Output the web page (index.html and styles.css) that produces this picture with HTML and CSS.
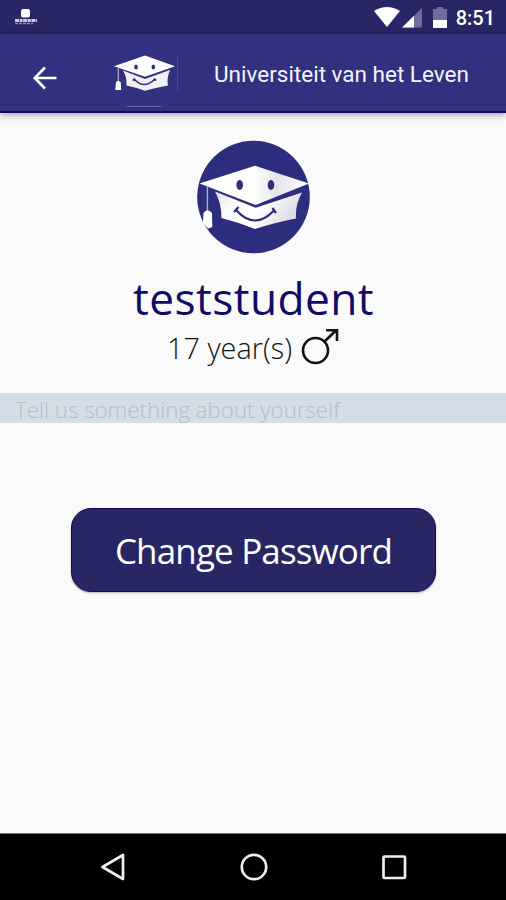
FILE: index.html
```html
<!DOCTYPE html>
<html lang="en">
<head>
  <meta charset="UTF-8" />
  <meta name="viewport" content="width=device-width, initial-scale=1.0" />
  <title>Universiteit van het Leven</title>
  <link rel="stylesheet" href="styles.css">
</head>
<body>

  <div class="screen">
    <div class="status-bar">
      <svg class="notification" width="24" height="18" viewBox="0 0 24 18">
        <rect x="7" y="1" width="9" height="8.500" rx="2" fill="#fff" />
        <path d="M1 12.500H23" stroke="#c9c8dc" stroke-width="3" stroke-dasharray="4 .6 3 .6" />
        <path d="M1 15.500H19" stroke="#9291b5" stroke-width="1.300" stroke-dasharray="3 1" />
      </svg>
      <div class="status-icons">
        <svg width="76" height="24" viewBox="0 0 76 24">
          <path d="M1 6Q14 -2 27 6L14 22Z" fill="#fff" />
          <path d="M49 3V22.500H29Z" fill="#6f6e9b" />
          <path d="M41 10.800V22.500H29Z" fill="#fff" />
          <path d="M60 4H64V2H70V4H74V15H60Z" fill="#6f6e9b" />
          <path d="M60 15H74V23H60Z" fill="#fff" />
        </svg>
        <span class="clock">8:51</span>
      </div>
    </div>

    <header class="app-bar">
      <button class="back-btn" aria-label="Back">
        <svg width="26" height="26" viewBox="0 0 26 26">
          <path d="M13 2.500L2.800 13L13 23.500M3 13H24.500" fill="none" stroke="#fff" stroke-width="2.700" />
        </svg>
      </button>
      <svg class="logo" width="68" height="56" viewBox="112 52 68 56">
        <path d="M114 66.300L145 55.500L175 66.300L145 76.800Z" fill="#fff" />
        <path d="M123 70.500L145 79L170 70Q166.500 78 168 85.500Q157 87.500 145 90.700Q136 87.500 126.500 85.500Q127 77 123 70.500Z" fill="#f1f1f3" />
        <ellipse cx="136" cy="67" rx="1.800" ry="2.600" fill="#2d2d7d" />
        <ellipse cx="153.300" cy="67" rx="1.800" ry="2.600" fill="#2d2d7d" />
        <path d="M134 79Q144 90 155 79M132.800 80.300L135 78.500M154 78.500L156.200 80.300" fill="none" stroke="#2d2d7d" stroke-width="1.600" />
        <path d="M118.300 67V82" stroke="#a5a4c8" stroke-width="1.300" />
        <path d="M116 82Q118.300 80 120.700 82L121.200 90H115.200Z" fill="#fff" />
        <path d="M177.500 56V92" stroke="#44438b" />
        <path d="M127 106.500H161" stroke="#66659f" />
      </svg>
      <h1>Universiteit van het Leven</h1>
    </header>

    <main class="profile">
      <svg class="avatar" width="114" height="114" viewBox="196 140 114 114">
        <defs>
          <linearGradient id="capShade" x1="0" y1="0" x2="1" y2="0">
            <stop offset=".5" stop-color="#fff" />
            <stop offset=".7" stop-color="#e4e4e8" />
            <stop offset="1" stop-color="#fff" />
          </linearGradient>
          <linearGradient id="faceShade" x1="0" y1="0" x2="1" y2=".3">
            <stop offset="0" stop-color="#dedee3" />
            <stop offset=".25" stop-color="#fafafa" />
            <stop offset=".6" stop-color="#fff" />
            <stop offset="1" stop-color="#dcdce1" />
          </linearGradient>
        </defs>
        <circle cx="253.500" cy="197" r="56.300" fill="#2d2d7d" />
        <path d="M199.500 183.500L255 165.800L309 183.500L255.700 205Z" fill="url(#capShade)" />
        <path d="M215 191.500L255.700 207.700L302 192.500Q295 205 296 218.500Q277 222 255 229Q239 222.500 221.500 218Q221.500 203 215 191.500Z" fill="url(#faceShade)" />
        <ellipse cx="239.700" cy="185" rx="3.300" ry="5" fill="#2d2d7d" />
        <ellipse cx="271" cy="185" rx="3.300" ry="5" fill="#2d2d7d" />
        <path d="M236.500 210.500Q255 230.500 274 210.500M234 212L238.500 207M272.500 208L276 213" fill="none" stroke="#2d2d7d" stroke-width="2.200" />
        <path d="M207.400 186V212" stroke="#aaa9cc" stroke-width="1.400" />
        <path d="M203.500 213Q207.500 207.500 212 213L212.300 227L208 228.500L203 223Z" fill="#fff" />
      </svg>

      <h2 class="username">teststudent</h2>
      <div class="details">
        <span>17 year(s)</span>
        <svg width="38" height="38" viewBox="0 0 38 38">
          <g fill="none" stroke="#111" stroke-width="2.600">
            <circle cx="14.500" cy="22.500" r="12.500" />
            <path d="M23.500 13.500L35.500 2M25 2.300H36V13" />
          </g>
        </svg>
      </div>

      <input class="about" type="text" placeholder="Tell us something about yourself" />

      <button class="password-btn">Change Password</button>
    </main>

    <nav class="nav-bar">
      <svg width="28" height="30" viewBox="0 0 28 30">
        <path d="M24 3V27L3.500 15Z" fill="none" stroke="#eee" stroke-width="2.700" stroke-linejoin="round" />
      </svg>
      <svg width="28" height="30" viewBox="0 0 28 30">
        <circle cx="14" cy="15" r="12.200" fill="none" stroke="#eee" stroke-width="2.700" />
      </svg>
      <svg width="28" height="30" viewBox="0 0 28 30">
        <rect x="3.500" y="4.500" width="21.500" height="21.500" rx="1" fill="none" stroke="#eee" stroke-width="2.700" />
      </svg>
    </nav>
  </div>

</body>
</html>
```
FILE: styles.css
```css
* {
  box-sizing: border-box;
}

body {
  margin: 0;
  background-color: #fafafa;
  font-family: "Open Sans", sans-serif;
}

svg {
  display: block;
  flex-shrink: 0;
}

button {
  border: none;
  cursor: pointer;
}

.screen {
  display: flex;
  flex-direction: column;
  height: 900px;
}

.status-bar {
  display: flex;
  justify-content: space-between;
  height: 34px;
  padding: 5px 11px 0 14px;
  background-color: #282664;
}

.notification {
  margin-top: 3px;
}

.status-icons {
  display: flex;
  gap: 7px;
}

.clock {
  color: #fff;
  font: 500 20px/26px Roboto, sans-serif;
}

/* header */
.app-bar {
  display: flex;
  align-items: flex-start;
  height: 79px;
  padding: 18px 0 0 32px;
  background-color: #31317f;
  border-bottom: 2px solid #120b66;
  box-shadow: 0 2px 7px rgba(0, 0, 0, 0.35);
}

.back-btn {
  margin-top: 13px;
  padding: 0;
  background: none;
}

.logo {
  margin-left: 54px;
}

.app-bar h1 {
  margin: 7px 0 0 34px;
  color: #f4f4fa;
  font: 400 22.500px/30px Roboto, sans-serif;
  white-space: nowrap;
}

/* profile */
.profile {
  display: flex;
  flex: 1;
  flex-direction: column;
  align-items: center;
  padding-top: 27px;
}

.username {
  margin: 14px 0 0 1px;
  color: #120b66;
  font-size: 44.300px;
  font-weight: 400;
  line-height: 60px;
  letter-spacing: 0.4px;
}

.details {
  display: flex;
  gap: 9px;
  height: 38px;
  color: #111;
  font-size: 28.800px;
  font-weight: 300;
  line-height: 39px;
}

.about {
  width: 100%;
  height: 30px;
  margin-top: 27px;
  padding: 2px 15px 0;
  border: none;
  background-color: #d4dde8;
  font: 300 22.300px "Open Sans", sans-serif;
}

.about::placeholder {
  color: #b5bdc7;
}

.password-btn {
  width: 365px;
  height: 84px;
  margin: 85px 0 0 1px;
  padding: 0;
  border: 1px solid #120b5c;
  border-radius: 20px;
  background-color: #282664;
  box-shadow: 0 1px 2px rgba(0, 0, 0, 0.3);
  color: #fff;
  font: 400 35px "Open Sans", sans-serif;
  letter-spacing: -0.85px;
}

.nav-bar {
  display: flex;
  justify-content: space-between;
  height: 67px;
  padding: 18px 98px 0 99px;
  border-top: 1px solid #777;
  background-color: #000;
}
```
